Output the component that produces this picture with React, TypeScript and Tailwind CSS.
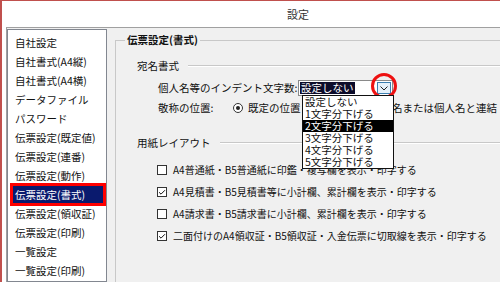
import { Check } from "lucide-react";

const navItems = [
  "自社設定",
  "自社書式(A4縦)",
  "自社書式(A4横)",
  "データファイル",
  "パスワード",
  "伝票設定(既定値)",
  "伝票設定(連番)",
  "伝票設定(動作)",
  "伝票設定(書式)",
  "伝票設定(領収証)",
  "伝票設定(印刷)",
  "一覧設定",
  "一覧設定(印刷)",
];

const indentOptions = [
  "設定しない",
  "1文字分下げる",
  "2文字分下げる",
  "3文字分下げる",
  "4文字分下げる",
  "5文字分下げる",
];

const layoutOptions = [
  { label: "A4普通紙・B5普通紙に印鑑・複写欄を表示・印字する", checked: false },
  { label: "A4見積書・B5見積書等に小計欄、累計欄を表示・印字する", checked: true },
  { label: "A4請求書・B5請求書に小計欄、累計欄を表示・印字する", checked: false },
  { label: "二面付けのA4領収証・B5領収証・入金伝票に切取線を表示・印字する", checked: true },
];

function Radio({ on }: { on?: boolean }) {
  return (
    <span className="flex h-[10px] w-[10px] shrink-0 items-center justify-center rounded-full border border-[#333] bg-white">
      {on && <span className="h-[4px] w-[4px] rounded-full bg-[#222]" />}
    </span>
  );
}

function SectionHead({ title }: { title: string }) {
  return (
    <div className="flex h-[14px] items-center gap-[9px] pl-[21px]">
      <span>{title}</span>
      <div className="h-[2px] flex-1 border-t border-b border-t-[#c8c8c8] border-b-white" />
    </div>
  );
}

export default function App() {
  return (
    <div className="flex h-[282px] w-[500px] flex-col overflow-hidden border-t border-l-2 border-[#c0504d] bg-white font-['Noto_Sans_CJK_JP',sans-serif] text-[10.5px] leading-[14px] text-[#111]">
      {/* title bar */}
      <div className="flex h-[26px] shrink-0 items-center justify-center pl-[94px] text-[11px] text-[#333]">
        設定
      </div>

      <div className="ml-[4px] flex flex-1 overflow-hidden border-t border-l border-[#a0a0a0] bg-[#f0f0f0]">
        {/* list */}
        <div className="mt-[1px] w-[100px] shrink-0 border border-[#828790] bg-white pt-[3px]">
          {navItems.map((item) => {
            const selected = item === "伝票設定(書式)";
            return (
              <div key={item} className="flex h-[19px] items-center">
                {selected ? (
                  <div className="ml-[5px] mr-[3px] flex h-[17px] flex-1 items-center bg-[#0a1a6e] pl-[2px] text-white outline-[3px] outline-[#ff0000]">
                    {item}
                  </div>
                ) : (
                  <span className="pl-[7px]">{item}</span>
                )}
              </div>
            );
          })}
        </div>

        {/* panel */}
        <div className="ml-[8px] flex-1 overflow-hidden">
          <fieldset className="mt-[5px] h-[260px] w-[420px] border border-[#c8c8c8]">
            <legend className="ml-[9px] px-[2px] font-bold">伝票設定(書式)</legend>

            <div className="mt-[12px]">
              <SectionHead title="宛名書式" />
            </div>

            <div className="mt-[7px] flex h-[16px] items-center pl-[42px]">
              <span className="w-[140px] shrink-0">個人名等のインデント文字数:</span>
              <div className="relative flex h-[16px] w-[95px] items-center border border-[#8a8a8a] bg-white">
                <span className="ml-[1px] bg-[#0c0c2a] px-[1px] leading-[12px] text-white">設定しない</span>
                <span className="ml-auto mr-[1px] flex h-[12px] w-[14px] items-center justify-center border border-[#3c7fb1] bg-[#e5f1fb]">
                  <svg width="8" height="5" viewBox="0 0 8 5">
                    <path d="M0.5 0.5 L4 4 L7.5 0.5" fill="none" stroke="#222" strokeWidth="1" />
                  </svg>
                </span>
                {/* annotation ring */}
                <span className="absolute right-[-5px] top-[-8px] h-[26px] w-[26px] rounded-full border-[3px] border-[#ee1111]" />
                {/* open list */}
                <div className="absolute left-[3px] top-[14px] z-10 w-[92px] border border-[#111] bg-white text-[10.5px] leading-[12px]">
                  {indentOptions.map((opt, i) => (
                    <div
                      key={opt}
                      className={i === 2 ? "h-[12px] bg-black pl-[2px] text-white" : "h-[12px] pl-[2px]"}
                    >
                      {opt}
                    </div>
                  ))}
                </div>
              </div>
            </div>

            <div className="mt-[5px] flex h-[14px] items-center pl-[42px]">
              <span className="w-[75px] shrink-0">敬称の位置:</span>
              <Radio on />
              <span className="ml-[5px]">既定の位置</span>
              <span className="ml-[66px]">
                <Radio />
              </span>
              <span className="ml-[5px]">氏名または個人名と連結</span>
            </div>

            <div className="mt-[21px]">
              <SectionHead title="用紙レイアウト" />
            </div>

            <div className="mt-[9px] flex flex-col text-[10px]">
              {layoutOptions.map((o) => (
                <div key={o.label} className="flex h-[22px] items-center gap-[6px] pl-[41px]">
                  <span className="flex h-[10px] w-[10px] shrink-0 items-center justify-center border border-[#333] bg-white">
                    {o.checked && <Check size={9} strokeWidth={3} className="text-[#111]" />}
                  </span>
                  <span>{o.label}</span>
                </div>
              ))}
            </div>
          </fieldset>
        </div>
      </div>
    </div>
  );
}
